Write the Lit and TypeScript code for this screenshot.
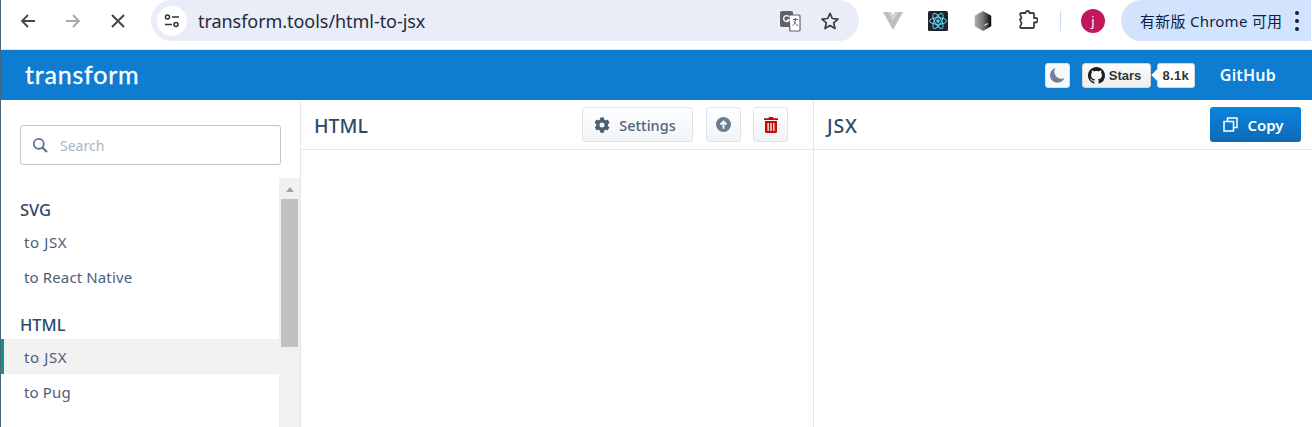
import { LitElement, html, css } from "lit";
import { customElement } from "lit/decorators.js";

@customElement("app-root")
export class AppRoot extends LitElement {
  static styles = css`
    :host { display: block; width: 1312px; height: 427px; overflow: hidden; background: #fff; font-family: "Noto Sans", "Open Sans", sans-serif; color: #2a4365; }
    .page { display: flex; height: 427px; }
    .edge { width: 1px; background: #47667c; flex: none; }
    .main { flex: 1; min-width: 0; display: flex; flex-direction: column; }
    .chrome { height: 49px; display: flex; align-items: flex-start; border-bottom: 1px solid #dfe4ec; background: #fff; flex: none; }
    .nav { display: flex; width: 150px; flex: none; height: 41px; align-items: center; padding-left: 18px; gap: 27px; box-sizing: border-box; }
    .nav svg { display: block; }
    .omni { width: 708px; height: 41px; background: #e9edf7; border-radius: 21px; display: flex; align-items: center; flex: none; box-sizing: border-box; padding-left: 6px; }
    .tune { width: 30px; height: 30px; border-radius: 50%; background: #fff; display: flex; align-items: center; justify-content: center; flex: none; }
    .url { font-size: 18px; color: #1f2a3a; margin-left: 11px; flex: 1; letter-spacing: -0.05px; }
    .omni-icons { display: flex; gap: 19px; padding-right: 19px; align-items: center; }
    .exts { display: flex; align-items: center; height: 41px; flex: none; }
    .v { margin-left: 24px; }
    .react { margin-left: 25px; }
    .cube { margin-left: 26px; }
    .puzzle { margin-left: 25px; }
    .sep { width: 1px; height: 20px; background: #c9d9ef; margin: 0 20px 0 22px; }
    .avatar { width: 24px; height: 24px; border-radius: 50%; background: #c2185b; color: #fff; font-size: 13px; display: flex; align-items: center; justify-content: center; flex: none; }
    .update { margin-left: 16px; width: 190px; height: 41px; background: #d3e3fd; border-radius: 21px 0 0 21px; display: flex; align-items: center; padding-left: 19px; box-sizing: border-box; font-size: 15px; letter-spacing: 0.25px; color: #0b1f45; font-family: "Noto Sans", "Noto Sans CJK SC", sans-serif; flex: none; white-space: nowrap; }
    .dots { display: flex; flex-direction: column; gap: 4px; margin-left: 13px; }
    .dots i { width: 4px; height: 4px; background: #0b1f45; border-radius: 50%; display: block; }

    .top { height: 50px; flex: none; background: #0e7dd1; display: flex; align-items: center; color: #fff; }
    .logo { font-family: "Lato", sans-serif; font-size: 25px; margin-left: 24px; letter-spacing: 0.8px; font-weight: 400; flex: 1; position: relative; top: -1px; -webkit-text-stroke: 0.3px #fff; }
    .moon { width: 25px; height: 25px; background: #f7fafc; border-radius: 3px; display: flex; align-items: center; justify-content: center; border: 1px solid #d5e0ea; box-sizing: border-box; margin-right: 12px; }
    .stars { width: 69px; height: 25px; background: linear-gradient(#fcfcfc, #eeeeee); border: 1px solid #d5d5d5; box-sizing: border-box; border-radius: 3px; display: flex; align-items: center; padding-left: 5px; gap: 4px; color: #333; font: 700 13px "Liberation Sans", sans-serif; }
    .count { position: relative; margin-left: 6px; width: 38px; height: 25px; background: #fff; border: 1px solid #d5d5d5; box-sizing: border-box; border-radius: 3px; display: flex; align-items: center; justify-content: center; color: #333; font: 700 13px "Liberation Sans", sans-serif; letter-spacing: 0.3px; }
    .count::before { content: ""; position: absolute; left: -5px; top: 7px; width: 8px; height: 8px; background: #fff; transform: rotate(45deg); }
    .count span { position: relative; }
    .gh { font-size: 16px; font-weight: 600; margin: 0 36px 0 25px; color: #f7fbff; letter-spacing: 0.2px; }

    .body { flex: 1; display: flex; min-height: 0; }
    .side { width: 299px; flex: none; border-right: 1px solid #e2e8f0; display: flex; flex-direction: column; }
    .search { margin: 25px 19px 13px 19px; height: 40px; width: 261px; box-sizing: border-box; border: 1px solid #bcc8d4; border-radius: 3px; display: flex; align-items: center; padding-left: 11px; flex: none; }
    .search span { margin-left: 12px; font-size: 14px; color: #a9b6c4; }
    .list { flex: 1; display: flex; min-height: 0; }
    .items { width: 278px; flex: none; padding-top: 20px; }
    .track { width: 21px; background: #f1f1f1; flex: none; display: flex; flex-direction: column; align-items: center; }
    .arrow { width: 0; height: 0; border: 4.5px solid transparent; border-bottom: 5px solid #a3a3a3; border-top: 0; margin-top: 9px; margin-bottom: 7px; }
    .thumb { width: 17px; height: 148px; background: #c1c1c1; }
    .group { font-size: 16.5px; font-weight: 500; color: #2c4a68; line-height: 24px; padding-left: 19px; margin-bottom: 2px; }
    .item { font-size: 15px; letter-spacing: 0.13px; color: #4a6078; height: 35px; line-height: 37px; padding-left: 23px; box-sizing: border-box; }
    .item.wide { letter-spacing: 0.6px; }
    .item.last { margin-bottom: 19px; }
    .item.on { background: #f2f2f2; border-left: 3px solid #169381; padding-left: 20px; }
    .pane { width: 512px; flex: none; border-right: 1px solid #e2e8f0; display: flex; flex-direction: column; }
    .pane.r { flex: 1; width: auto; border-right: 0; }
    .head { height: 50px; box-sizing: border-box; border-bottom: 1px solid #e2e8f0; display: flex; align-items: center; padding-left: 13px; padding-right: 11px; flex: none; }
    .pane:not(.r) .head { padding-right: 12px; }
    .title { font-size: 19.5px; font-weight: 500; color: #2c4a68; flex: 1; position: relative; top: 1px; }
    .pane.r .title { letter-spacing: 0.8px; }
    .btn { height: 35px; box-sizing: border-box; border: 1px solid #dfe4ea; border-radius: 3px; background: linear-gradient(#fdfefe, #f1f4f7); display: flex; align-items: center; justify-content: center; color: #52667c; font-size: 14.5px; font-weight: 500; }
    .settings { width: 111px; gap: 9px; margin-right: 13px; padding-right: 5px; }
    .sq { width: 35px; }
    .sq.up { margin-right: 12px; }
    .sq.del { margin-right: 13px; }
    .copy { width: 91px; height: 35px; border-radius: 3px; background: linear-gradient(#0a84dc, #0f69b7); color: #fff; font-size: 15px; font-weight: 600; display: flex; align-items: center; justify-content: center; gap: 9px; padding-right: 4px; box-sizing: border-box; }
  `;

  render() {
    return html`<div class="page"><div class="edge"></div><div class="main">
      <div class="chrome">
        <div class="nav">
          <svg width="18" height="18" viewBox="0 0 18 18" fill="none" stroke="#474747" stroke-width="1.8"><path d="M16 9H3M9 3 3 9l6 6"/></svg>
          <svg width="18" height="18" viewBox="0 0 18 18" fill="none" stroke="#a8a8a8" stroke-width="1.8"><path d="M2 9h13M9 3l6 6-6 6"/></svg>
          <svg width="18" height="18" viewBox="0 0 18 18" fill="none" stroke="#474747" stroke-width="2"><path d="M3 3l12 12M15 3L3 15"/></svg>
        </div>
        <div class="omni">
          <div class="tune"><svg width="16" height="14" viewBox="0 0 16 14" fill="none" stroke="#333" stroke-width="1.5"><circle cx="3.500" cy="3" r="2"/><path d="M8 3h7M1 10.500h7"/><circle cx="12" cy="10.500" r="2"/></svg></div>
          <div class="url">transform.tools/html-to-jsx</div>
          <div class="omni-icons">
            <svg width="22" height="22" viewBox="0 0 22 22"><rect x="1" y="1" width="13" height="16" rx="2" fill="#5f6368"/><path d="M10 5h10a1 1 0 0 1 1 1v14a1 1 0 0 1-1 1H11z" fill="#fff" stroke="#5f6368" stroke-width="1.200"/><path d="M14 9.500h5M16.500 8v1.500c0 3-1.500 5-3 6M15 11.500c.8 2 2.200 3.400 4 4" fill="none" stroke="#5f6368" stroke-width="1"/><path d="M10 6.800A3 3 0 1 0 10.300 10H7.700" fill="none" stroke="#fff" stroke-width="1.300"/></svg>
            <svg width="20" height="20" viewBox="0 0 20 20" fill="none" stroke="#3c4043" stroke-width="1.700"><path d="M10 2.300l2.300 5.200 5.700.6-4.300 3.800 1.300 5.600-5-2.900-5 2.900 1.300-5.600L2 8.100l5.700-.6z" stroke-linejoin="round"/></svg>
          </div>
        </div>
        <div class="exts">
          <svg class="v" width="20" height="20" viewBox="0 0 20 20"><path d="M0 1h7l3 5 3-5h7L10 19z" fill="#bdbdbd"/><path d="M5 1h3.500L10 4l1.500-3H15l-5 9z" fill="#d4d4d4"/></svg>
          <svg class="react" width="20" height="20" viewBox="0 0 20 20"><rect width="20" height="20" rx="1.500" fill="#20232a"/><g fill="none" stroke="#61dafb" stroke-width="1"><ellipse cx="10" cy="10" rx="8.500" ry="3.300"/><ellipse cx="10" cy="10" rx="8.500" ry="3.300" transform="rotate(60 10 10)"/><ellipse cx="10" cy="10" rx="8.500" ry="3.300" transform="rotate(120 10 10)"/></g><circle cx="10" cy="10" r="1.700" fill="#61dafb"/></svg>
          <svg class="cube" width="18" height="20" viewBox="0 0 18 20"><defs><linearGradient id="cg" x1="0" x2="1" y1="0" y2="0"><stop offset="0" stop-color="#a8a8a8"/><stop offset="0.5" stop-color="#777"/><stop offset="1" stop-color="#111"/></linearGradient></defs><path d="M9 1l7.500 4.200v9.600L9 19l-7.500-4.200V5.200z" fill="url(#cg)" stroke="url(#cg)" stroke-width="1.500" stroke-linejoin="round"/><path d="M10.500 14.500l3.500-2" stroke="#ddd" stroke-width="1.200"/></svg>
          <svg class="puzzle" width="21" height="21" viewBox="0 0 21 21" fill="none" stroke="#3c4043" stroke-width="1.800"><path d="M4 3h4.500a2 2 0 0 1 4 0H16a1 1 0 0 1 1 1v4h1.500a2 2 0 0 1 0 4.500H17V17a1 1 0 0 1-1 1H4l-1-1 1.500-3.500L3 9.500 4.500 8 3 4z" stroke-linejoin="round"/></svg>
          <div class="sep"></div>
          <div class="avatar">j</div>
          <div class="update">有新版 Chrome 可用<div class="dots"><i></i><i></i><i></i></div></div>
        </div>
      </div>
      <div class="top">
        <div class="logo">transform</div>
        <div class="moon"><svg width="16" height="16" viewBox="0 0 16 16"><path d="M6.500 1A7.500 7.500 0 1 0 15.500 11 7 7 0 0 1 6.500 1z" fill="#718096"/></svg></div>
        <div class="stars"><svg width="17" height="17" viewBox="0 0 16 16" fill="#1b1f23"><path d="M8 0C3.580 0 0 3.580 0 8c0 3.540 2.290 6.530 5.470 7.590.4.070.55-.17.55-.38 0-.19-.01-.82-.01-1.490-2.010.37-2.530-.49-2.690-.94-.09-.23-.48-.94-.82-1.130-.28-.15-.68-.52-.01-.53.630-.01 1.080.58 1.230.82.720 1.210 1.870.87 2.330.66.070-.52.280-.87.510-1.070-1.780-.2-3.640-.89-3.640-3.950 0-.87.310-1.590.820-2.150-.08-.2-.36-1.020.08-2.120 0 0 .67-.21 2.200.82.640-.18 1.320-.27 2-.27s1.360.09 2 .27c1.530-1.040 2.200-.82 2.200-.82.44 1.100.16 1.920.08 2.120.51.560.82 1.270.82 2.150 0 3.070-1.870 3.750-3.650 3.950.29.250.54.730.54 1.480 0 1.070-.01 1.930-.01 2.200 0 .21.150.46.550.38A8.010 8.010 0 0 0 16 8c0-4.420-3.580-8-8-8z"/></svg>Stars</div>
        <div class="count"><span>8.1k</span></div>
        <div class="gh">GitHub</div>
      </div>
      <div class="body">
        <div class="side">
          <div class="search">
            <svg width="16" height="16" viewBox="0 0 16 16" fill="none" stroke="#5f7488" stroke-width="1.800"><circle cx="6.800" cy="6.800" r="5"/><path d="M10.500 10.500l4.500 4.500" stroke-width="2.200"/></svg>
            <span>Search</span>
          </div>
          <div class="list">
            <div class="items">
              <div class="group">SVG</div>
              <div class="item wide">to JSX</div>
              <div class="item last">to React Native</div>
              <div class="group">HTML</div>
              <div class="item on wide">to JSX</div>
              <div class="item">to Pug</div>
            </div>
            <div class="track"><div class="arrow"></div><div class="thumb"></div></div>
          </div>
        </div>
        <div class="pane">
          <div class="head">
            <div class="title">HTML</div>
            <div class="btn settings"><svg width="16" height="16" viewBox="0 0 512 512" fill="#4a5f76"><path d="M487 316l-42-24c4-23 4-47 0-70l42-25c5-3 7-8 5-13-11-35-30-67-54-93-4-4-9-5-14-2l-42 24c-18-15-38-27-60-35V30c0-6-4-10-9-11-37-8-74-8-109 0-5 1-9 5-9 11v48c-22 8-43 20-60 35L93 89c-5-3-10-2-14 2-24 26-43 58-54 93-2 5 0 10 5 13l42 25c-4 23-4 47 0 70l-42 24c-5 3-7 8-5 13 11 35 30 67 54 93 4 4 9 5 14 2l42-24c18 15 38 27 60 35v48c0 6 4 10 9 11 37 8 74 8 109 0 5-1 9-5 9-11v-48c22-8 43-20 60-35l42 24c5 3 10 2 14-2 24-26 43-58 54-93 2-5 0-10-5-13zM256 336a80 80 0 1 1 0-160 80 80 0 0 1 0 160z"/></svg>Settings</div>
            <div class="btn sq up"><svg width="15" height="15" viewBox="0 0 16 16"><circle cx="8" cy="8" r="8" fill="#6b7d90"/><path d="M8 12.500V5M4.800 8L8 4.800 11.200 8" fill="none" stroke="#fff" stroke-width="2"/></svg></div>
            <div class="btn sq del"><svg width="14" height="16" viewBox="0 0 14 16" fill="#c20a0a"><path d="M5 0h4l.5 1.200H14v1.800H0V1.200h4.500z"/><path d="M1 4h12v10.500A1.500 1.500 0 0 1 11.500 16h-9A1.500 1.500 0 0 1 1 14.500zM3.500 6v8h1.300V6zm2.800 0v8h1.400V6zm2.900 0v8h1.300V6z" fill-rule="evenodd"/></svg></div>
          </div>
        </div>
        <div class="pane r">
          <div class="head">
            <div class="title">JSX</div>
            <div class="copy"><svg width="15" height="15" viewBox="0 0 15 15" fill="none" stroke="#fff" stroke-width="1.500"><rect x="1" y="4.500" width="9.500" height="9.500"/><path d="M4.500 4.500V1H14v9.500h-3.500"/></svg>Copy</div>
          </div>
        </div>
      </div>
    </div></div>`;
  }
}
